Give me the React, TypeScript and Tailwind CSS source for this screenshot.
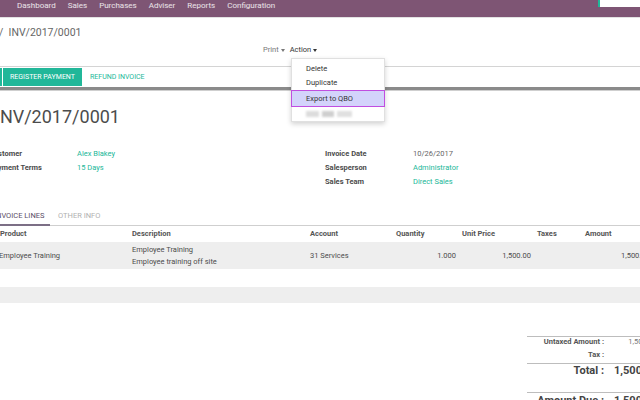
import React from "react";

const teal = "text-[#21b799]";

function Caret() {
  return <span className="inline-block ml-[2px] align-middle w-0 h-0 border-l-[2.5px] border-r-[2.5px] border-t-[3px] border-l-transparent border-r-transparent border-t-current" />;
}

export default function App() {
  const nav = ["Dashboard", "Sales", "Purchases", "Adviser", "Reports", "Configuration"];
  return (
    <div className="relative w-[640px] h-[400px] overflow-hidden bg-white text-[#4c4c4c]" style={{ fontFamily: "Roboto, 'Liberation Sans', sans-serif" }}>
      {/* navbar */}
      <div className="h-[17px] bg-[#7e5574] flex items-start">
        <div className="flex items-center h-[11px] pl-[17px] gap-[12px] text-[8px] text-white/85">
          {nav.map((n) => (
            <span key={n}>{n}</span>
          ))}
        </div>
        <div className="ml-auto mt-0 h-[7px] w-[42px] bg-white border-l-[2px] border-[#21b799]" />
      </div>
      <div className="h-[1px] bg-[#e2e2e2]" />
      {/* control panel */}
      <div className="h-[49px] border-b border-[#d4d4d4]">
        <div className="pt-[8px] leading-[14px] text-[10.5px] text-[#666] whitespace-nowrap ml-[-1px]">
          /&nbsp;&nbsp;INV/2017/0001
        </div>
        <div className="mt-[5px] leading-[10px] text-[7.5px] flex pl-[263px] gap-[5px]">
          <span className="text-[#777]">Print<Caret /></span>
          <span className="text-[#333]">Action<Caret /></span>
        </div>
      </div>
      {/* buttons */}
      <div className="h-[20px] flex items-center">
        <div className="w-[2px] h-[18px] bg-[#21b799]" />
        <div className="ml-[1px] h-[18px] w-[79px] bg-[#21b799] text-white text-[7px] flex items-center justify-center">REGISTER PAYMENT</div>
        <div className={`ml-[8px] text-[7px] ${teal}`}>REFUND INVOICE</div>
      </div>
      <div className="h-[3px] bg-[#8a8a8a]" />
      <div className="h-[1px] bg-[#cfcfcf]" />
      {/* title */}
      <div className="mt-[13px] ml-[-5px] text-[18px] leading-[26px] text-[#4c4c4c] whitespace-nowrap">INV/2017/0001</div>
      {/* fields */}
      <div className="mt-[17px] flex text-[7.5px] leading-[14px]">
        <div className="ml-[-11px] w-[88px] shrink-0 font-bold text-[#4c4c4c]">
          <div>Customer</div>
          <div>Payment Terms</div>
        </div>
        <div className={`w-[248px] shrink-0 ${teal}`}>
          <div>Alex Blakey</div>
          <div>15 Days</div>
        </div>
        <div className="w-[88px] shrink-0 font-bold text-[#4c4c4c]">
          <div>Invoice Date</div>
          <div>Salesperson</div>
          <div>Sales Team</div>
        </div>
        <div>
          <div className="text-[#666]">10/26/2017</div>
          <div className={teal}>Administrator</div>
          <div className={teal}>Direct Sales</div>
        </div>
      </div>
      {/* tabs */}
      <div className="mt-[21px] h-[16px] border-b border-[#cfcfcf] flex text-[7.5px] leading-[12px]">
        <div className="ml-[-6px] w-[56px] shrink-0 h-[16px] border-b-[2px] border-[#7c6f86] text-[#5a4d66]">INVOICE LINES</div>
        <div className="ml-[8px] text-[#b0b0b0]">OTHER INFO</div>
      </div>
      {/* table */}
      <div className="text-[7.5px] text-[#4c4c4c]">
        <div className="flex h-[16px] items-center font-bold text-[#555]">
          <div className="w-[132px] shrink-0">Product</div>
          <div className="w-[178px] shrink-0">Description</div>
          <div className="w-[86px] shrink-0">Account</div>
          <div className="w-[66px] shrink-0">Quantity</div>
          <div className="w-[75px] shrink-0">Unit Price</div>
          <div className="w-[48px] shrink-0">Taxes</div>
          <div className="shrink-0">Amount</div>
        </div>
        <div className="flex h-[27px] items-center bg-[#eeeeee]">
          <div className="w-[132px] shrink-0 -ml-[1px] mr-[1px] whitespace-nowrap">Employee Training</div>
          <div className="w-[178px] shrink-0 leading-[12px]">
            <div>Employee Training</div>
            <div>Employee training off site</div>
          </div>
          <div className="w-[86px] shrink-0">31 Services</div>
          <div className="w-[66px] shrink-0 text-right pr-[6px]">1.000</div>
          <div className="w-[75px] shrink-0 text-right pr-[6px]">1,500.00</div>
          <div className="w-[48px] shrink-0" />
          <div className="w-[36px] shrink-0" />
          <div className="shrink-0 whitespace-nowrap">1,500.00</div>
        </div>
        <div className="h-[18px]" />
        <div className="h-[16px] bg-[#eeeeee]" />
      </div>
      {/* totals */}
      <div className="mt-[33px] ml-[527px] w-[140px] text-[7.5px] font-bold text-[#555]">
        <div className="border-t border-[#bdbdbd]">
          <div className="flex h-[10px] items-center">
            <div className="w-[77px] shrink-0 text-right">Untaxed Amount :</div>
            <div className="w-[53px] shrink-0 text-right font-normal text-[#777]">1,500.00</div>
          </div>
          <div className="flex h-[16px] items-center">
            <div className="w-[77px] shrink-0 text-right">Tax :</div>
            <div className="w-[53px] shrink-0 text-right font-normal text-[#777]">0.00</div>
          </div>
        </div>
        <div className="border-t border-[#bdbdbd] h-[29px]">
          <div className="flex leading-[14px] text-[11px] text-[#444]">
            <div className="w-[77px] shrink-0 text-right">Total :</div>
            <div className="ml-[10px] whitespace-nowrap">1,500.00</div>
          </div>
        </div>
        <div className="border-t border-[#bdbdbd] pt-[1px]">
          <div className="flex leading-[14px] text-[11px] text-[#444]">
            <div className="w-[77px] shrink-0 text-right whitespace-nowrap">Amount Due :</div>
            <div className="ml-[10px] whitespace-nowrap">1,500.00</div>
          </div>
        </div>
      </div>
      {/* dropdown */}
      <div className="absolute left-[291px] top-[58px] w-[94px] h-[64px] bg-white border border-[#e0e0e0] shadow-[0_2px_5px_rgba(0,0,0,0.18)] pt-[3px] text-[7.5px] text-[#333]">
        <div className="h-[14px] leading-[14px] pl-[14px]">Delete</div>
        <div className="h-[14px] leading-[14px] pl-[14px]">Duplicate</div>
        <div className="h-[17px] leading-[15px] pl-[14px] -mx-[1px] bg-[#d3d3fb] border border-[#c04ee0]">Export to QBO</div>
        <div className="h-[14px] flex items-center pl-[14px] gap-[3px]">
          <div className="w-[13px] h-[6px] bg-[#dcdcdc] blur-[1px]" />
          <div className="w-[12px] h-[6px] bg-[#cfcfcf] blur-[1px]" />
          <div className="w-[15px] h-[6px] bg-[#e0e0e0] blur-[1px]" />
        </div>
      </div>
    </div>
  );
}
